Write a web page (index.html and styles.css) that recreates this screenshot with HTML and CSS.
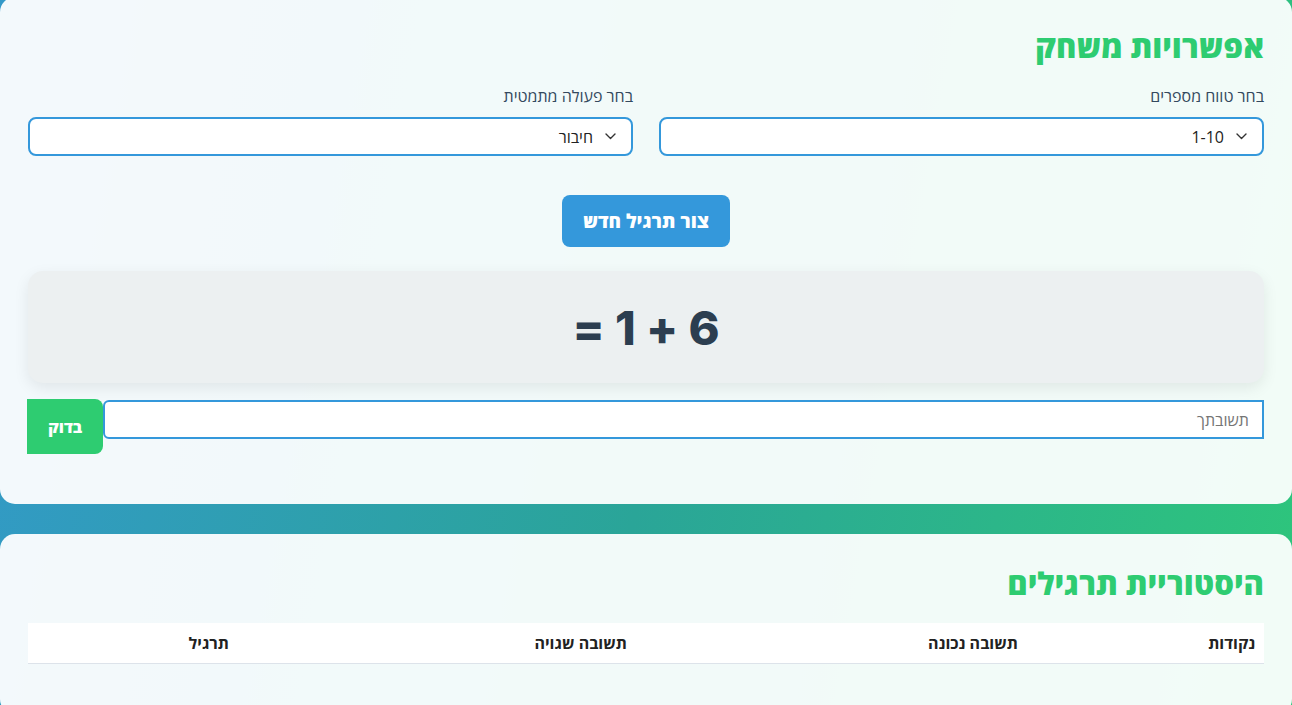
FILE: index.html
```html
<!DOCTYPE html>
<html lang="he" dir="rtl">
<head>
<meta charset="utf-8">
<title>משחק חשבון</title>
<link rel="stylesheet" href="styles.css">
</head>
<body>
<div class="page">
  <section class="card options">
    <h2 class="card-title">אפשרויות משחק</h2>
    <div class="selects">
      <div class="field">
        <label class="field-label" for="range">בחר טווח מספרים</label>
        <div class="select-wrap">
          <select id="range" class="select">
            <option>1-10</option>
            <option>1-20</option>
            <option>1-100</option>
          </select>
          <svg class="chevron" width="11" height="7" viewBox="0 0 11 7"><path d="M1 1l4.5 4.5L10 1" fill="none" stroke="#333" stroke-width="1.4" stroke-linecap="round" stroke-linejoin="round"/></svg>
        </div>
      </div>
      <div class="field">
        <label class="field-label" for="op">בחר פעולה מתמטית</label>
        <div class="select-wrap">
          <select id="op" class="select">
            <option>חיבור</option>
            <option>חיסור</option>
            <option>כפל</option>
          </select>
          <svg class="chevron" width="11" height="7" viewBox="0 0 11 7"><path d="M1 1l4.5 4.5L10 1" fill="none" stroke="#333" stroke-width="1.4" stroke-linecap="round" stroke-linejoin="round"/></svg>
        </div>
      </div>
    </div>
    <div class="new-row">
      <button class="btn-new">צור תרגיל חדש</button>
    </div>
    <div class="problem">6 + 1 =</div>
    <div class="answer-row">
      <input class="answer" type="text" placeholder="תשובתך">
      <button class="btn-check">בדוק</button>
    </div>
  </section>

  <section class="card history">
    <h2 class="card-title">היסטוריית תרגילים</h2>
    <table class="history-table">
      <thead>
        <tr>
          <th class="col-points">נקודות</th>
          <th class="col-correct">תשובה נכונה</th>
          <th class="col-wrong">תשובה שגויה</th>
          <th class="col-ex">תרגיל</th>
        </tr>
      </thead>
      <tbody></tbody>
    </table>
  </section>
</div>
</body>
</html>
```

FILE: styles.css
```css
* { box-sizing: border-box; }

html, body {
  margin: 0;
  padding: 0;
}

body {
  font-family: "Open Sans", "Liberation Sans", "DejaVu Sans", sans-serif;
  background: linear-gradient(100deg, #3399c9 0%, #2aa598 50%, #2ec77a 100%);
  min-height: 900px;
  color: #2c3e50;
}

.page {
  margin-top: -3px;
  display: flex;
  flex-direction: column;
  gap: 30px;
}

.card {
  background: rgba(255, 255, 255, 0.94);
  border-radius: 15px;
  padding: 30px 28px 50px;
}

.card-title {
  margin: 0 0 21px;
  font-size: 31px;
  line-height: 38px;
  font-weight: 800;
  color: #2ecc71;
}

.selects {
  display: grid;
  grid-template-columns: 1fr 1fr;
  gap: 26px;
}

.field-label {
  display: block;
  font-size: 16px;
  line-height: 21px;
  color: #34495e;
  margin-bottom: 10px;
}

.select-wrap {
  position: relative;
}

.select {
  appearance: none;
  -webkit-appearance: none;
  width: 100%;
  height: 39px;
  border: 2px solid #3498db;
  border-radius: 8px;
  background: #fff;
  font-family: inherit;
  font-size: 16px;
  color: #222;
  padding: 0 38px 0 12px;
  direction: rtl;
  outline: none;
}

.chevron {
  position: absolute;
  right: 17px;
  top: 16px;
  pointer-events: none;
}

.new-row {
  display: flex;
  justify-content: center;
  margin-top: 39px;
}

.btn-new {
  height: 52px;
  width: 168px;
  border: none;
  border-radius: 8px;
  background: #3498db;
  color: #fff;
  font-family: inherit;
  font-size: 19px;
  font-weight: 800;
}

.problem {
  margin-top: 24px;
  height: 112px;
  background: #ecf0f1;
  border-radius: 15px;
  box-shadow: 0 5px 15px rgba(0, 0, 0, 0.08);
  display: flex;
  align-items: center;
  justify-content: center;
  font-family: "Inter", "Liberation Sans", sans-serif;
  font-size: 47px;
  font-weight: 800;
  color: #2c3e50;
}

.answer-row {
  display: flex;
  align-items: flex-start;
  margin-top: 16px;
  margin-left: -1px;
}

.answer {
  flex: 1;
  height: 39px;
  margin-top: 1px;
  border: 2px solid #3498db;
  border-radius: 6px 0 0 6px;
  background: #fff;
  font-family: inherit;
  font-size: 16px;
  padding: 0 13px;
  outline: none;
  color: #222;
}

.answer::placeholder {
  color: #757575;
}

.btn-check {
  width: 76px;
  height: 55px;
  border: none;
  border-radius: 0 8px 8px 0;
  background: #2ecc71;
  color: #fff;
  font-family: inherit;
  font-size: 16px;
  font-weight: 800;
}

.history-table {
  width: 100%;
  border-collapse: collapse;
  table-layout: fixed;
  background: #fff;
}

.history-table th {
  height: 40px;
  padding: 0 9px;
  text-align: right;
  font-size: 16px;
  font-weight: 700;
  color: #222;
  border-bottom: 1px solid #dde3ea;
}

.col-points { width: 237px; }
.col-correct { width: 391px; }
.col-wrong { width: 398px; }
.col-ex { width: 210px; }
```
